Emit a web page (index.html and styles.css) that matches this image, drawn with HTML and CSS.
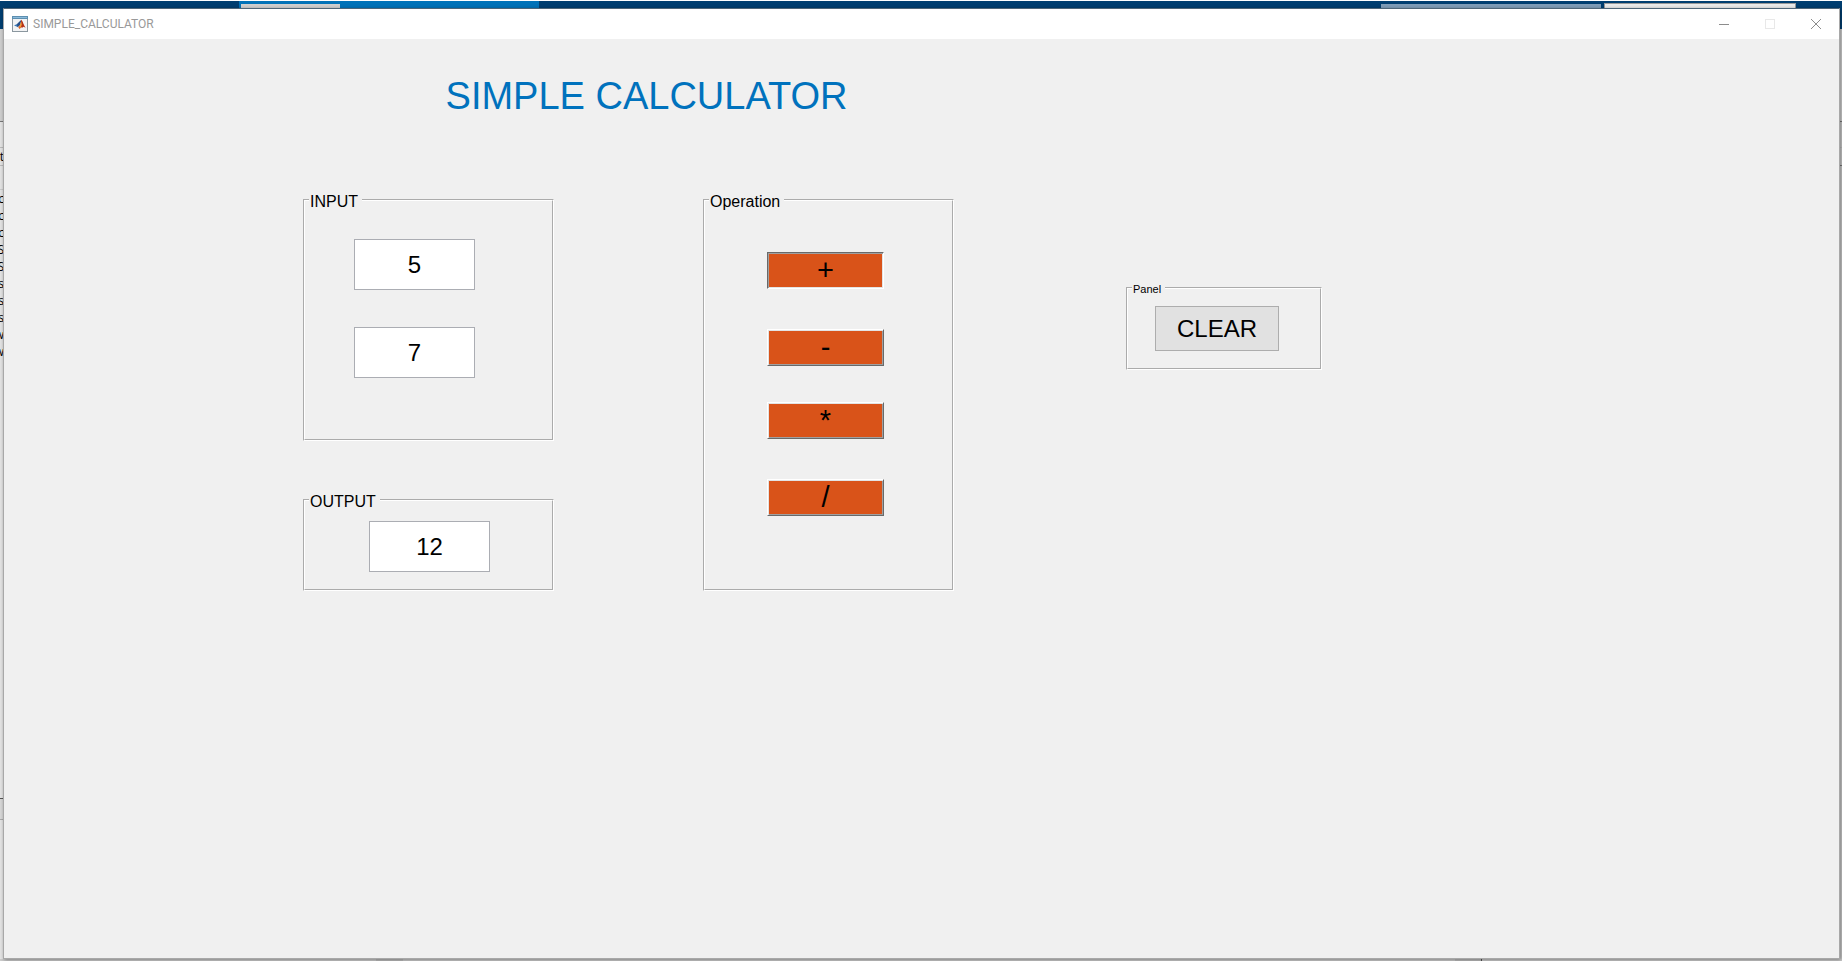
FILE: index.html
```html
<!DOCTYPE html>
<html lang="en">
<head>
<meta charset="utf-8">
<title>SIMPLE_CALCULATOR</title>
<link rel="stylesheet" href="styles.css">
</head>
<body>
<div class="desktop">
  <div class="ribbon">
    <div class="ribbon-tabs"><div class="ribbon-tab"></div></div>
    <div class="ribbon-tools"></div>
    <div class="ribbon-search"></div>
  </div>
  <div class="backdrop">
    <div class="edge edge-left">
      <div class="edge-tools"></div>
      <div class="edge-path"></div>
      <div class="edge-head"><span>t</span></div>
      <div class="edge-sub"></div>
      <div class="edge-files">
        <span>c</span><span>c</span><span>c</span><span>S</span><span>S</span><span>s</span><span>s</span><span>s</span><span>w</span><span>w</span>
      </div>
      <div class="edge-details"></div>
      <div class="edge-foot"></div>
    </div>
    <div class="edge edge-right">
      <div class="edge-tools"></div>
      <div class="edge-path"></div>
      <div class="edge-head"></div>
    </div>
  </div>
  <div class="statusbar"><div class="status-cell"></div><div class="status-cell status-cell-end"></div></div>

  <div class="window">
    <header class="titlebar">
      <svg class="app-icon" viewBox="0 0 16 16" aria-hidden="true">
        <rect x="0.5" y="0.5" width="15" height="15" fill="#f2f3f4" stroke="#8b979f"/>
        <rect x="0" y="0" width="16" height="3" fill="#5d8fb0"/>
        <rect x="1" y="1" width="14" height="1" fill="#8bbbdc"/>
        <path d="M2 9.5 5 8 7 9 5.5 11 4.5 10.5Z" fill="#3d78b4"/>
        <path d="M5 8 9.3 3.8 8.3 9 5.5 11.2Z" fill="#274f87"/>
        <path d="M9.3 3.8 8.6 8.8 6.2 11 7.5 13 10 10.8 10.8 7Z" fill="#d95b20"/>
        <path d="M9.3 3.8C10.8 5.5 11.8 9.3 13.6 11.8L11.5 10.8 9.8 12 8.8 9Z" fill="#b53018"/>
        <path d="M9.2 5.5 9.8 8.8 8.2 11.8 7.4 11Z" fill="#f3a13a"/>
      </svg>
      <span class="window-title">SIMPLE_CALCULATOR</span>
      <button class="window-button" type="button" aria-label="Minimize">
        <svg viewBox="0 0 10 10"><path d="M0 5.5H10" stroke="#8c8c8c"/></svg>
      </button>
      <button class="window-button" type="button" aria-label="Maximize" disabled>
        <svg viewBox="0 0 10 10"><rect x="0.5" y="0.5" width="9" height="9" fill="none" stroke="#e8e8e8"/></svg>
      </button>
      <button class="window-button" type="button" aria-label="Close">
        <svg viewBox="0 0 10 10"><path d="M0 0 10 10M10 0 0 10" stroke="#8c8c8c"/></svg>
      </button>
    </header>

    <main class="figure">
      <h1 class="heading">SIMPLE CALCULATOR</h1>
      <div class="column-values">
        <fieldset class="panel">
          <legend>INPUT</legend>
          <div class="panel-body body-input">
            <input class="field" type="text" value="5" aria-label="First number">
            <input class="field" type="text" value="7" aria-label="Second number">
          </div>
        </fieldset>
        <fieldset class="panel">
          <legend>OUTPUT</legend>
          <div class="panel-body body-output">
            <input class="field" type="text" value="12" aria-label="Result">
          </div>
        </fieldset>
      </div>
      <fieldset class="panel column-operations">
        <legend>Operation</legend>
        <div class="panel-body body-operations">
          <button class="operator operator-pressed" type="button" aria-pressed="true">+</button>
          <button class="operator" type="button">-</button>
          <button class="operator" type="button">*</button>
          <button class="operator" type="button">/</button>
        </div>
      </fieldset>
      <fieldset class="panel column-clear">
        <legend>Panel</legend>
        <div class="panel-body body-clear">
          <button class="clear" type="button">CLEAR</button>
        </div>
      </fieldset>
    </main>
  </div>
</div>
</body>
</html>
```

FILE: styles.css
```css
* { box-sizing: border-box; }

body {
  margin: 0;
  font-family: "Liberation Sans", Arial, sans-serif;
  color: #000;
}

.desktop {
  position: relative;
  display: flex;
  flex-direction: column;
  height: 100vh;
  overflow: hidden;
  padding-top: 1px;
  background: #fff;
}

/* Application behind the window */
.ribbon {
  display: grid;
  grid-template-columns: 239fr 300fr 842fr 220fr 3fr 192fr 46fr;
  flex: none;
  height: 28px;
  background: #003e70;
}
.ribbon-tabs { grid-column: 2; padding: 3px 0 0 2px; background: #0072b8; }
.ribbon-tab { width: 99px; height: 100%; background: #d0d0d0; }
.ribbon-tools { grid-column: 4; margin-top: 3px; background: #7f9db8; }
.ribbon-search { grid-column: 6; margin-top: 2px; border: 1px solid #999; background: #ececec; }

.backdrop { display: flex; flex: 1; justify-content: space-between; min-height: 0; }
.edge { display: flex; flex-direction: column; width: 4px; overflow: hidden; background: #e4e4e4; font-family: "Open Sans", sans-serif; font-size: 12px; }
.edge-right { background: #c8c8c8; }
.edge-tools { height: 93px; border-bottom: 1px solid #777; background: #cfcfcf; }
.edge-path { height: 26px; border-bottom: 1px solid #bbb; }
.edge-head { display: flex; justify-content: flex-end; height: 18px; border-bottom: 1px solid #bbb; line-height: 17px; }
.edge-right .edge-head { border-color: #777; }
.edge-sub { height: 24px; border-bottom: 1px solid #ccc; }
.edge-files { display: flex; flex-direction: column; align-items: flex-end; flex: 1; line-height: 17px; }
.edge-details { height: 22px; border-top: 1px solid #555; border-bottom: 1px solid #aaa; background: #d8d8d8; }
.edge-foot { height: 139px; }

.statusbar { display: flex; justify-content: space-between; flex: none; height: 2px; padding: 0 360px 0 376px; background: #cdcdcd; }
.status-cell { width: 27px; background: #bdbdbd; }
.status-cell-end { border-right: 1px solid #555; }

/* Calculator window */
.window {
  position: absolute;
  inset: 8px 2px 2px 3px;
  display: flex;
  flex-direction: column;
  border: 1px solid #a8a8a8;
  border-top-color: #4f6678;
  background: #f0f0f0;
  box-shadow: 1px 1px 4px #0006;
}
.titlebar { display: flex; align-items: center; flex: none; height: 30px; padding-left: 8px; background: #fff; }
.app-icon { width: 16px; height: 16px; margin-right: 5px; }
.window-title { flex: 1; font-family: Roboto, sans-serif; font-size: 12px; line-height: 16px; color: #999; }
.window-button { display: grid; place-items: center; width: 46px; height: 30px; padding: 0; border: 0; background: none; }
.window-button svg { width: 10px; height: 10px; }

.figure {
  display: grid;
  grid-template-columns: 299fr 251fr 149fr 251fr 172fr 196fr 517fr;
  align-items: start;
  padding-top: 35px;
}
.heading {
  grid-column: 2 / 5;
  margin: 0 0 72px;
  padding-left: 36px;
  font-size: 38px;
  font-weight: 400;
  line-height: 44px;
  text-align: center;
  color: #0072bd;
}
.column-values { grid-area: 2 / 2; display: flex; flex-direction: column; gap: 49px; }
.column-operations { grid-area: 2 / 4; }

.panel { min-width: 0; margin: 0; padding: 0; border: 2px groove #fff; }
.panel legend { margin-left: 4px; padding: 3px 4px 0 1px; font-size: 16px; line-height: 17px; }
.column-clear { grid-area: 2 / 6; margin-top: 91px; }
.column-clear legend { padding-top: 2px; font-size: 11px; line-height: 12px; }

.panel-body { display: flex; flex-direction: column; align-items: flex-start; }
.body-input { gap: 37px; padding: 29px 0 61px 49px; }
.body-output { padding: 11px 0 17px 64px; }
.body-operations { display: grid; grid-template-rows: 77px 73px 77px 37px; padding: 42px 0 73px 62px; }
.body-clear { padding: 11px 0 17px 27px; }

.field {
  width: 121px;
  height: 51px;
  padding: 0;
  border: 1px solid #abadb3;
  background: #fff;
  font: 24px "Liberation Sans", Arial, sans-serif;
  text-align: center;
  color: #000;
}
.operator {
  width: 117px;
  height: 37px;
  padding: 0;
  border: 1px solid;
  border-color: #fff #696969 #696969 #fff;
  background: #d95319;
  box-shadow: inset 1px 1px #e3e3e3, inset -1px -1px #a0a0a0;
  font: 29px/33px "Liberation Sans", Arial, sans-serif;
  color: #000;
}
.operator-pressed {
  border-color: #696969 #fff #fff #696969;
  box-shadow: inset 1px 1px #a0a0a0, inset -1px -1px #e3e3e3;
}
.clear {
  width: 124px;
  height: 45px;
  padding: 0;
  border: 1px solid #adadad;
  background: #e1e1e1;
  font: 24px "Liberation Sans", Arial, sans-serif;
  color: #000;
}
```
